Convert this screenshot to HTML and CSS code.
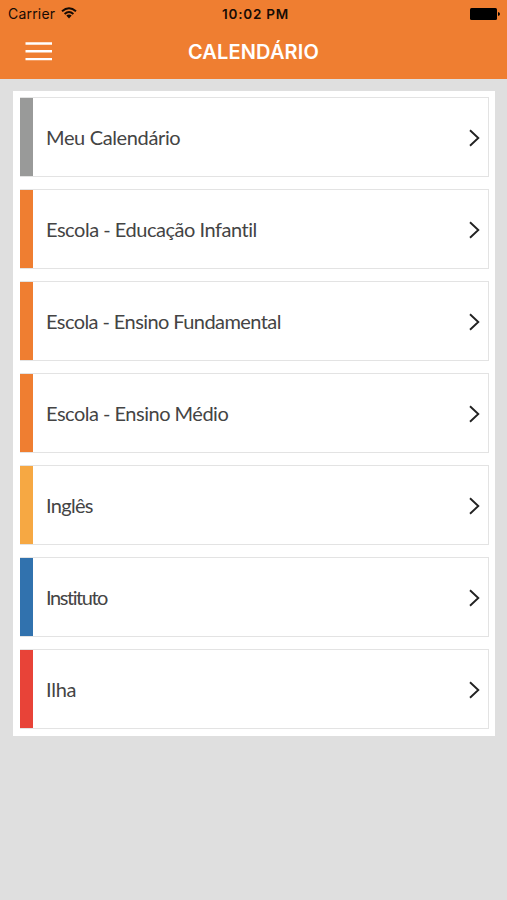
FILE: index.html
```html
<!DOCTYPE html>
<html lang="pt-BR">
<head>
<meta charset="utf-8">
<meta name="viewport" content="width=device-width, initial-scale=1">
<title>Calendário</title>
<link rel="stylesheet" href="styles.css">
</head>
<body>
<header class="header">
  <div class="status">
    <div class="carrier"><span>Carrier</span>
      <svg class="wifi" width="16" height="12" viewBox="0 0 16 12" fill="none" stroke="currentColor" stroke-width="1.9"><path d="M1 4.3Q8-2 15 4.3M3.6 7Q8 3 12.4 7"/><path d="M5.3 8.6Q8 6.5 10.7 8.6L8 11.4Z" fill="currentColor" stroke="none"/></svg>
    </div>
    <div class="time">10:02 PM</div>
    <svg class="battery" width="30" height="12" viewBox="0 0 30 12"><rect width="27" height="12" rx="1.5"/><path d="M28 4Q30 4.5 30 6T28 8Z"/></svg>
  </div>
  <div class="nav">
    <button class="menu" aria-label="Menu"><svg width="27" height="19" viewBox="0 0 27 19" stroke="#fff" stroke-width="2.4"><path d="M0.5 1.5H27M0.5 9.3H27M0.5 17.1H27"/></svg></button>
    <h1 class="title">CALENDÁRIO</h1>
  </div>
</header>
<main class="panel">
  <a class="card gray"><span class="label meu">Meu Calendário</span><svg class="chevron" viewBox="0 0 11 18"><path d="M1 1.2L9.3 9L1 16.8"/></svg></a>
  <a class="card orange"><span class="label infantil">Escola - Educação Infantil</span><svg class="chevron" viewBox="0 0 11 18"><path d="M1 1.2L9.3 9L1 16.8"/></svg></a>
  <a class="card orange"><span class="label fundamental">Escola - Ensino Fundamental</span><svg class="chevron" viewBox="0 0 11 18"><path d="M1 1.2L9.3 9L1 16.8"/></svg></a>
  <a class="card orange"><span class="label medio">Escola - Ensino Médio</span><svg class="chevron" viewBox="0 0 11 18"><path d="M1 1.2L9.3 9L1 16.8"/></svg></a>
  <a class="card yellow"><span class="label ingles">Inglês</span><svg class="chevron" viewBox="0 0 11 18"><path d="M1 1.2L9.3 9L1 16.8"/></svg></a>
  <a class="card blue"><span class="label instituto">Instituto</span><svg class="chevron" viewBox="0 0 11 18"><path d="M1 1.2L9.3 9L1 16.8"/></svg></a>
  <a class="card red"><span class="label ilha">Ilha</span><svg class="chevron" viewBox="0 0 11 18"><path d="M1 1.2L9.3 9L1 16.8"/></svg></a>
</main>
</body>
</html>
```
FILE: styles.css
```css
* { box-sizing: border-box; }
body { margin: 0; min-height: 100vh; background: #dfdfdf; font-family: Inter, sans-serif; }
.header { height: 79px; background: #ef7e31; }
.status { display: grid; grid-template-columns: 1fr auto 1fr; align-items: center; height: 27px; padding: 0 7px 0 8px; color: #160b04; }
.carrier { display: flex; align-items: center; gap: 6px; font-size: 14px; letter-spacing: 0.2px; }
.wifi { margin-top: -2px; }
.time { font-size: 13.5px; font-weight: 600; letter-spacing: 0.75px; padding-left: 3px; }
.battery { justify-self: end; fill: #000; }
.nav { display: grid; grid-template-columns: 80px 1fr 80px; align-items: center; height: 50px; }
.menu { display: flex; margin: -2px 0 0 25px; padding: 0; border: 0; background: none; }
.title { margin: 0; text-align: center; color: #fff; font-size: 20px; font-weight: 600; letter-spacing: 0.15px; }
.panel { display: flex; flex-direction: column; gap: 12px; margin: 12px 12px 0 13px; padding: 6px 6px 7px 7px; background: #fff; }
.card { display: flex; align-items: center; height: 80px; padding-right: 8px; border: 1px solid #e3e3e3; border-left: 0; background: #fff; }
.card::before { content: ""; width: 13px; align-self: stretch; background: var(--accent); }
.gray { --accent: #999a99; }
.orange { --accent: #ef7e31; }
.yellow { --accent: #f6a843; }
.blue { --accent: #3172ae; }
.red { --accent: #e84338; }
.label { flex: 1; margin-left: 13px; color: #444; font: 20px/24px Lato, sans-serif; white-space: nowrap; font-variant-ligatures: none; }
.meu { letter-spacing: -0.36px; }
.infantil { letter-spacing: -0.47px; }
.fundamental { letter-spacing: -0.58px; }
.medio { letter-spacing: -0.5px; }
.ingles { letter-spacing: -0.7px; }
.instituto { letter-spacing: -1.45px; }
.ilha { letter-spacing: -0.25px; }
.chevron { width: 11px; height: 18px; margin-top: 1px; fill: none; stroke: #222; stroke-width: 1.9; }
```
